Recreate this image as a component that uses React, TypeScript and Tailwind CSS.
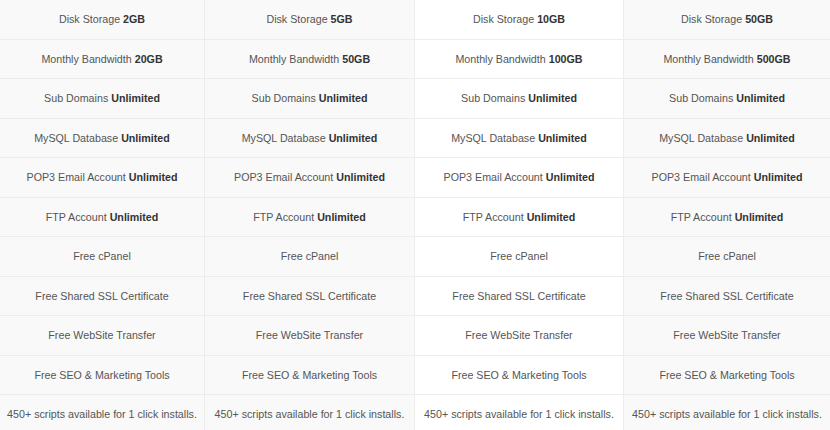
const plans = [
  { disk: '2GB', bw: '20GB' },
  { disk: '5GB', bw: '50GB' },
  { disk: '10GB', bw: '100GB', highlight: true },
  { disk: '50GB', bw: '500GB' },
];

function features(p: { disk: string; bw: string }) {
  return [
    ['Disk Storage', p.disk],
    ['Monthly Bandwidth', p.bw],
    ['Sub Domains', 'Unlimited'],
    ['MySQL Database', 'Unlimited'],
    ['POP3 Email Account', 'Unlimited'],
    ['FTP Account', 'Unlimited'],
    ['Free cPanel', ''],
    ['Free Shared SSL Certificate', ''],
    ['Free WebSite Transfer', ''],
    ['Free SEO & Marketing Tools', ''],
    ['450+ scripts available for 1 click installs.', ''],
  ];
}

export default function App() {
  return (
    <div
      className="w-[830px] h-[430px] overflow-hidden bg-white grid grid-cols-[204px_210px_209px_207px]"
      style={{ fontFamily: '"Liberation Sans", Arial, sans-serif' }}
    >
      {plans.map((plan, i) => (
        <div
          key={i}
          className={`flex flex-col ${i > 0 ? 'border-l border-[#ececec]' : ''} ${
            plan.highlight ? 'bg-white' : 'bg-[#f9f9f9]'
          }`}
        >
          {features(plan).map(([label, value], j) => (
            <div
              key={j}
              className="h-[39.5px] shrink-0 flex items-center justify-center border-b border-[#ececec] text-[10.7px] text-[#555] whitespace-nowrap"
            >
              <span>
                {label}
                {value && (
                  <>
                    {' '}
                    <b className="font-bold text-[#333]">{value}</b>
                  </>
                )}
              </span>
            </div>
          ))}
        </div>
      ))}
    </div>
  );
}
